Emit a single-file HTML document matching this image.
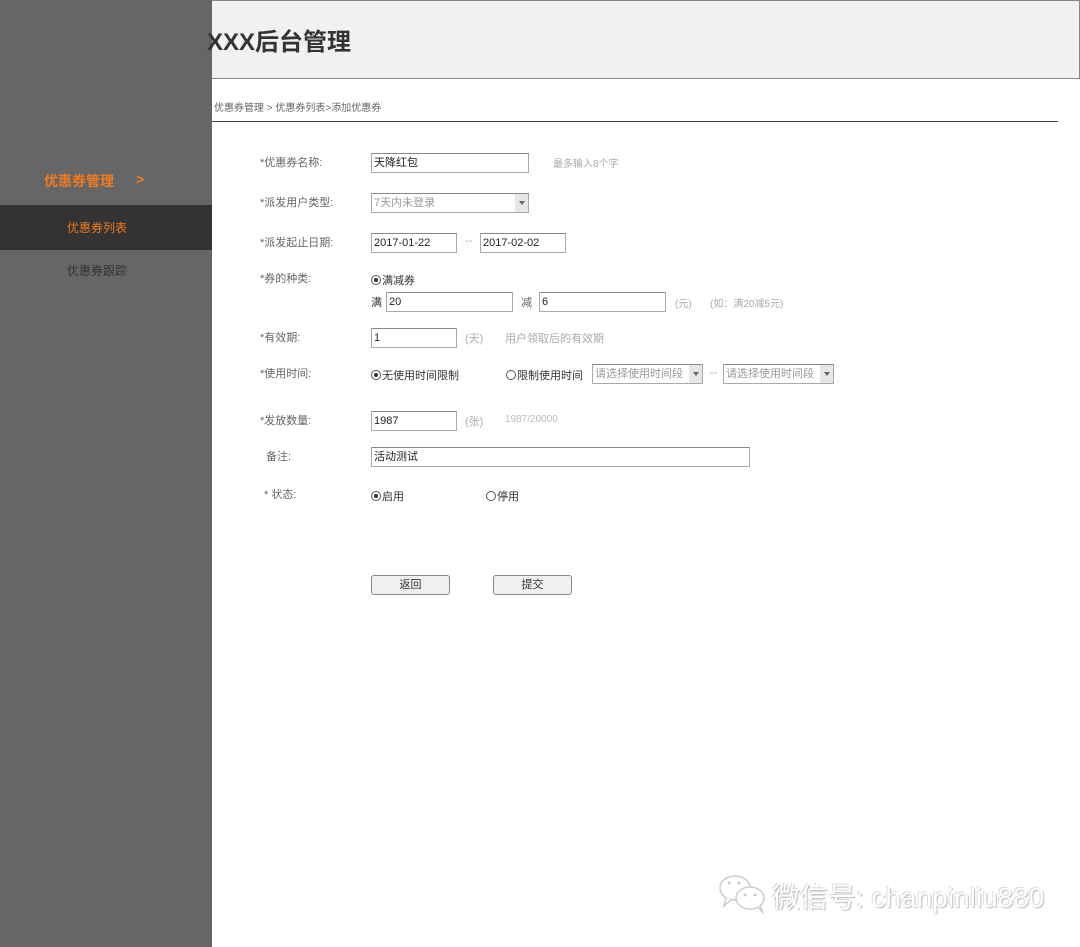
<!DOCTYPE html>
<html><head><meta charset="utf-8"><style>
*{margin:0;padding:0;box-sizing:border-box}
body{width:1080px;height:947px;position:relative;background:#fff;font-family:"Liberation Sans","Noto Sans CJK SC",sans-serif;overflow:hidden;font-size:11px;color:#555}
.a{position:absolute;white-space:nowrap}
.side{left:0;top:0;width:212px;height:947px;background:#666}
.hdr{left:212px;top:0;width:868px;height:79px;background:#f1f1f1;border:1px solid #888;border-left:none}
.in{position:absolute;height:20px;border:1px solid #aaa;border-top-color:#888;background:#fff;font-size:11px;color:#222;padding:2px 2px;line-height:14px}
.sel{color:#999}
.sel:after{content:"";position:absolute;right:0;top:0;width:13px;height:18px;background:#e6e6e6;}
.tri{position:absolute;right:3px;top:7px;width:0;height:0;border-left:3px solid transparent;border-right:3px solid transparent;border-top:4px solid #666;z-index:2}
.lbl{color:#666;margin-top:-3px}
.g{color:#aaa;margin-top:-2px}
.rr{margin-top:-2px}
.r{display:inline-block;width:10px;height:10px;border:1px solid #555;border-radius:50%;vertical-align:-1px;margin-right:1px;position:relative}
.r.on:after{content:"";position:absolute;left:2px;top:2px;width:4px;height:4px;border-radius:50%;background:#333}
.btn{position:absolute;height:20px;width:79px;border:1px solid #888;border-radius:3px;background:#f0f0f0;text-align:center;line-height:18px;color:#333}
</style></head><body>
<div class="a side"></div>
<div class="a" style="left:0;top:205px;width:212px;height:45px;background:#333"></div>
<div class="a" style="left:44px;top:171px;font-size:14px;font-weight:bold;color:#f07a1e">优惠券管理</div>
<div class="a" style="left:136px;top:171px;font-size:14px;font-weight:bold;color:#f07a1e">&gt;</div>
<div class="a" style="left:67px;top:219px;font-size:12px;color:#f07a1e">优惠券列表</div>
<div class="a" style="left:67px;top:262px;font-size:12px;color:#333">优惠券跟踪</div>
<div class="a hdr"></div>
<div class="a" style="left:207px;top:22px;font-size:24px;font-weight:bold;color:#333">XXX后台管理</div>
<div class="a" style="left:214px;top:99px;font-size:10px;color:#666">优惠券管理 &gt; 优惠券列表&gt;添加优惠券</div>
<div class="a" style="left:212px;top:121px;width:846px;height:1px;background:#444"></div>

<div class="a lbl" style="left:260px;top:157px">*优惠券名称:</div>
<div class="in" style="left:371px;top:153px;width:158px">天降红包</div>
<div class="a g" style="left:553px;top:157px;font-size:10px">最多输入8个字</div>

<div class="a lbl" style="left:260px;top:197px">*派发用户类型:</div>
<div class="in sel" style="left:371px;top:193px;width:158px">7天内未登录<span class="tri"></span></div>

<div class="a lbl" style="left:260px;top:237px">*派发起止日期:</div>
<div class="in" style="left:371px;top:233px;width:86px">2017-01-22</div>
<div class="a g" style="left:465px;top:237px">--</div>
<div class="in" style="left:480px;top:233px;width:86px">2017-02-02</div>

<div class="a lbl" style="left:260px;top:273px">*券的种类:</div>
<div class="a rr" style="left:371px;top:274px;color:#333"><span class="r on"></span>满减券</div>
<div class="a rr" style="left:371px;top:296px;color:#333">满</div>
<div class="in" style="left:386px;top:292px;width:127px">20</div>
<div class="a rr" style="left:521px;top:296px;color:#666">减</div>
<div class="in" style="left:539px;top:292px;width:127px">6</div>
<div class="a g" style="left:675px;top:297px;font-size:10px">(元)</div>
<div class="a g" style="left:710px;top:297px;font-size:10px">(如：满20减5元)</div>

<div class="a lbl" style="left:260px;top:332px">*有效期:</div>
<div class="in" style="left:371px;top:328px;width:86px">1</div>
<div class="a g" style="left:465px;top:332px">(天)</div>
<div class="a g" style="left:505px;top:332px">用户领取后的有效期</div>

<div class="a lbl" style="left:260px;top:368px">*使用时间:</div>
<div class="a rr" style="left:371px;top:369px;color:#333"><span class="r on"></span>无使用时间限制</div>
<div class="a rr" style="left:506px;top:369px;color:#333"><span class="r"></span>限制使用时间</div>
<div class="in sel" style="left:592px;top:364px;width:111px">请选择使用时间段<span class="tri"></span></div>
<div class="a g" style="left:710px;top:369px">--</div>
<div class="in sel" style="left:723px;top:364px;width:111px">请选择使用时间段<span class="tri"></span></div>

<div class="a lbl" style="left:260px;top:415px">*发放数量:</div>
<div class="in" style="left:371px;top:411px;width:86px">1987</div>
<div class="a g" style="left:465px;top:415px">(张)</div>
<div class="a g" style="left:505px;top:416px;font-size:10px;color:#bbb">1987/20000</div>

<div class="a lbl" style="left:266px;top:451px">备注:</div>
<div class="in" style="left:371px;top:447px;width:379px">活动测试</div>

<div class="a lbl" style="left:264px;top:489px">* 状态:</div>
<div class="a rr" style="left:371px;top:490px;color:#333"><span class="r on"></span>启用</div>
<div class="a rr" style="left:486px;top:490px;color:#333"><span class="r"></span>停用</div>

<div class="btn" style="left:371px;top:575px">返回</div>
<div class="btn" style="left:493px;top:575px">提交</div>

<svg class="a" style="left:718px;top:872px" width="52" height="44" viewBox="0 0 52 44"><g fill="#fff" stroke="#ccc" stroke-width="1.5"><ellipse cx="17" cy="16" rx="15" ry="12"/><path d="M8 26 L6 34 L14 27"/><ellipse cx="32" cy="26" rx="14" ry="11"/><path d="M40 35 L45 41 L42 33"/></g><g fill="#ccc"><circle cx="11" cy="11" r="1.5"/><circle cx="21" cy="11" r="1.5"/><circle cx="27" cy="23" r="1.5"/><circle cx="37" cy="23" r="1.5"/></g></svg>
<div class="a" style="left:772px;top:876px;font-size:28px;color:#fff;text-shadow:1px 1px 1px #bbb,-1px -1px 0 #ddd">微信号: chanpinliu880</div>
</body></html>
